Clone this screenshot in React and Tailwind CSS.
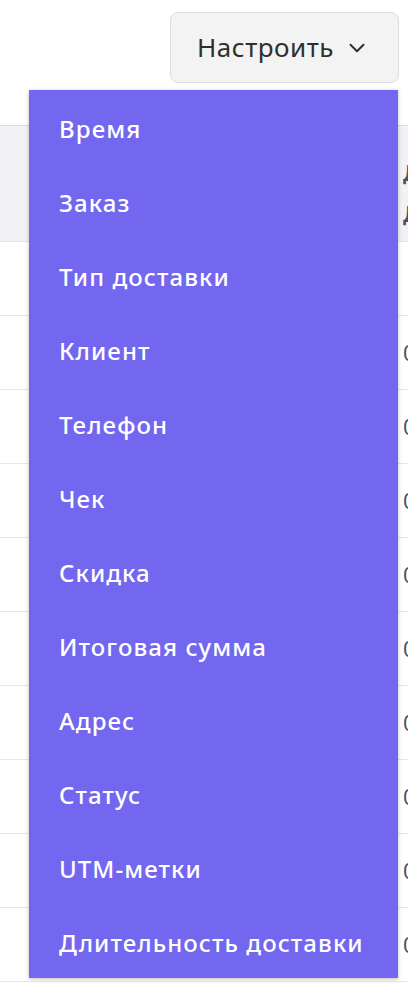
import { ChevronDown } from 'lucide-react';

const columns = [
    'Время',
    'Заказ',
    'Тип доставки',
    'Клиент',
    'Телефон',
    'Чек',
    'Скидка',
    'Итоговая сумма',
    'Адрес',
    'Статус',
    'UTM-метки',
    'Длительность доставки',
];

const rows = ['', '00:32', '00:41', '00:28', '00:37', '00:45', '00:30', '00:39', '00:34', '00:40'];

export default function App() {
    return (
        <div
            className="relative h-[993px] w-[408px] overflow-hidden bg-white"
            style={{ fontFamily: '"Noto Sans", "Open Sans", sans-serif' }}
        >
            {/* Toolbar */}
            <div className="flex h-[125px] justify-end pt-3 pr-[9px]">
                <button className="flex h-[71px] w-[229px] items-center gap-[10px] rounded-lg border border-[#dddddd] bg-[#f3f3f3] pl-[26px] text-[26px] tracking-[0.02em] text-[#2f2f2f]">
                    Настроить
                    <ChevronDown size={26} strokeWidth={1.8} />
                </button>
            </div>

            {/* Table behind */}
            <div className="border-t border-[#dcdce0]">
                <div className="flex h-[116px] items-center border-b border-[#e4e4ea] bg-[#f2f2f6] pt-[18px] pl-[403px]">
                    <div className="whitespace-nowrap text-[22px] font-semibold leading-[41px] text-[#4f4f60]">
                        <div>Дата</div>
                        <div>Доставка</div>
                    </div>
                </div>
                {rows.map((r, i) => (
                    <div
                        key={i}
                        className="flex h-[74px] items-center border-b border-[#e6e6ec] pl-[403px] text-[22px] whitespace-nowrap text-[#4f4f60]"
                    >
                        {r}
                    </div>
                ))}
            </div>

            {/* Dropdown */}
            <div className="absolute top-[90px] left-[29px] w-[369px] bg-[#7367ef] shadow-[0_1px_4px_rgba(0,0,0,0.25)]">
                {columns.map((c) => (
                    <div
                        key={c}
                        className="flex h-[74px] items-center pt-1 pl-[30px] text-[24px] font-medium tracking-[0.045em] whitespace-nowrap text-white"
                    >
                        {c}
                    </div>
                ))}
            </div>
        </div>
    );
}
